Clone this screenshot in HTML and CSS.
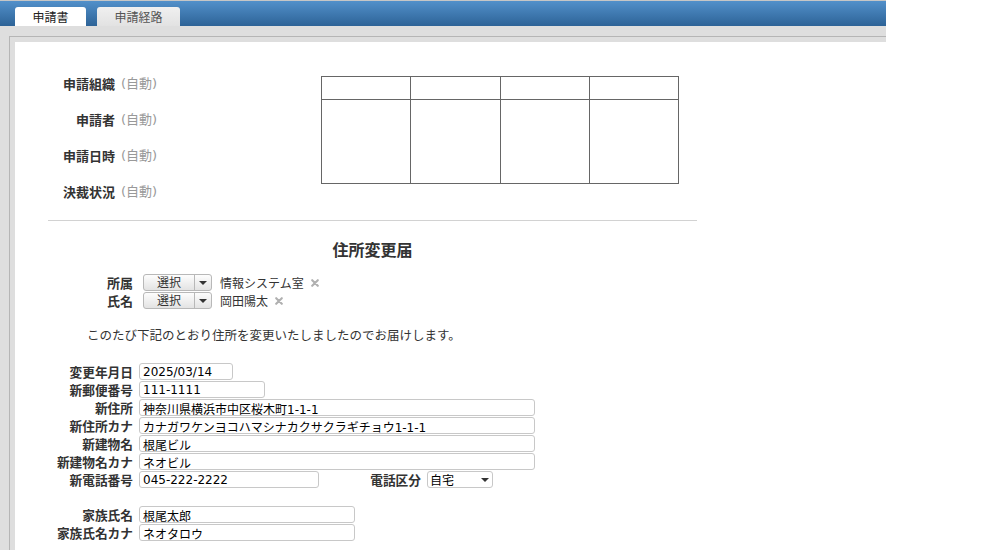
FILE: index.html
```html
<!DOCTYPE html>
<html lang="ja">
<head>
<meta charset="utf-8">
<title>申請書</title>
<link rel="stylesheet" href="styles.css">
</head>
<body>
<div class="app">
  <div class="tabbar">
    <div class="tab tab-active">申請書</div>
    <div class="tab">申請経路</div>
  </div>
  <div class="frame">
    <div class="frame-inner">
      <div class="sheet">
        <div class="content">
          <div class="meta">
            <div class="meta-list">
              <div class="meta-row"><span class="meta-label">申請組織</span><span class="auto">(自動)</span></div>
              <div class="meta-row"><span class="meta-label">申請者</span><span class="auto">(自動)</span></div>
              <div class="meta-row"><span class="meta-label">申請日時</span><span class="auto">(自動)</span></div>
              <div class="meta-row"><span class="meta-label">決裁状況</span><span class="auto">(自動)</span></div>
            </div>
            <div class="stamp">
              <div class="cell"></div><div class="cell"></div><div class="cell"></div><div class="cell"></div>
              <div class="cell"></div><div class="cell"></div><div class="cell"></div><div class="cell"></div>
            </div>
          </div>
          <hr class="divider">
          <h1 class="title">住所変更届</h1>
          <div class="pickers">
            <div class="picker-row">
              <span class="picker-label">所属</span>
              <span class="dd"><span class="dd-main">選択</span><span class="dd-arrow"><span class="tri"></span></span></span>
              <span class="picker-value">情報システム室</span>
              <svg class="remove" viewBox="0 0 10 10" width="8" height="8"><path d="M1.5 1.5 L8.5 8.5 M8.5 1.5 L1.5 8.5" stroke="#b0b0b0" stroke-width="2.6" stroke-linecap="round"/></svg>
            </div>
            <div class="picker-row">
              <span class="picker-label">氏名</span>
              <span class="dd"><span class="dd-main">選択</span><span class="dd-arrow"><span class="tri"></span></span></span>
              <span class="picker-value">岡田陽太</span>
              <svg class="remove" viewBox="0 0 10 10" width="8" height="8"><path d="M1.5 1.5 L8.5 8.5 M8.5 1.5 L1.5 8.5" stroke="#b0b0b0" stroke-width="2.6" stroke-linecap="round"/></svg>
            </div>
          </div>
          <p class="notice">このたび下記のとおり住所を変更いたしましたのでお届けします。</p>
          <div class="form">
            <div class="form-row"><label class="form-label">変更年月日</label><input class="field w-date" type="text" value="2025/03/14"></div>
            <div class="form-row"><label class="form-label">新郵便番号</label><input class="field w-zip" type="text" value="111-1111"></div>
            <div class="form-row"><label class="form-label">新住所</label><input class="field w-long" type="text" value="神奈川県横浜市中区桜木町1-1-1"></div>
            <div class="form-row"><label class="form-label">新住所カナ</label><input class="field w-long" type="text" value="カナガワケンヨコハマシナカクサクラギチョウ1-1-1"></div>
            <div class="form-row"><label class="form-label">新建物名</label><input class="field w-long" type="text" value="根尾ビル"></div>
            <div class="form-row"><label class="form-label">新建物名カナ</label><input class="field w-long" type="text" value="ネオビル"></div>
            <div class="form-row">
              <label class="form-label">新電話番号</label><input class="field w-tel" type="text" value="045-222-2222">
              <label class="form-label label-kind">電話区分</label>
              <span class="select"><span class="select-text">自宅</span><span class="tri"></span></span>
            </div>
            <div class="form-row row-gap"><label class="form-label">家族氏名</label><input class="field w-name" type="text" value="根尾太郎"></div>
            <div class="form-row"><label class="form-label">家族氏名カナ</label><input class="field w-name" type="text" value="ネオタロウ"></div>
          </div>
        </div>
      </div>
    </div>
  </div>
</div>
</body>
</html>
```

FILE: styles.css
```css
* { box-sizing: border-box; }
html, body { margin: 0; padding: 0; background: #fff; }
body {
  font-family: "DejaVu Sans", "Noto Sans CJK JP", sans-serif;
  color: #333;
  overflow: hidden;
}
.app { width: 886px; }

.tabbar {
  height: 26px;
  border-top: 1px solid #c6c6c6;
  background: linear-gradient(#5290ca, #2d6397);
  display: flex;
  align-items: flex-end;
  padding-left: 15px;
  gap: 11px;
}
.tab {
  height: 19px;
  width: 83px;
  border-radius: 3px 3px 0 0;
  background: linear-gradient(#f0f0f0, #e2e2e2);
  color: #555;
  font-family: "Noto Sans CJK JP", sans-serif;
  font-size: 12px;
  line-height: 19px;
  text-align: center;
}
.tab-active {
  width: 71px;
  background: #fff;
  color: #222;
}

.frame {
  background: #dedede;
  padding: 10px 0 0 9px;
}
.frame-inner {
  border-top: 1px solid #b5b5b5;
  border-left: 1px solid #b5b5b5;
  padding: 5px 0 0 5px;
}
.sheet {
  background: #fff;
  min-height: 520px;
}
.content {
  margin-left: 33px;
  width: 649px;
  padding-top: 24px;
}

.meta { display: flex; }
.meta-list { width: 273px; flex: none; }
.meta-row {
  display: flex;
  height: 36px;
  line-height: 36px;
  font-size: 13px;
}
.meta-label {
  width: 67px;
  text-align: right;
  font-weight: bold;
  color: #333;
  font-family: "Noto Sans CJK JP", sans-serif;
}
.auto {
  margin-left: 6px;
  color: #999;
}
.stamp {
  margin-top: 10px;
  display: grid;
  grid-template-columns: 89px 90px 89px 89px;
  grid-template-rows: 23px 84px;
  border-top: 1px solid #666;
  border-left: 1px solid #666;
  align-self: flex-start;
  flex: none;
}
.cell {
  border-right: 1px solid #666;
  border-bottom: 1px solid #666;
}

.divider {
  margin: 10px 0 0;
  border: 0;
  border-top: 1px solid #d2d2d2;
  height: 0;
}
.title {
  margin: 18px 0 0;
  font-size: 16px;
  line-height: 20px;
  font-weight: bold;
  text-align: center;
  color: #333;
  font-family: "Noto Sans CJK JP", sans-serif;
}

.pickers { margin-top: 15px; }
.picker-row {
  display: flex;
  align-items: center;
  height: 17px;
  margin-bottom: 1px;
}
.picker-label {
  width: 85px;
  text-align: right;
  font-size: 13px;
  font-weight: bold;
  font-family: "Noto Sans CJK JP", sans-serif;
  color: #333;
}
.dd {
  margin-left: 10px;
  display: flex;
  width: 69px;
  height: 17px;
  border: 1px solid #b8b8b8;
  border-radius: 3px;
  background: linear-gradient(#fdfdfd, #e3e3e3);
}
.dd-main {
  width: 50px;
  text-align: center;
  font-size: 12px;
  line-height: 16px;
  color: #333;
}
.dd-arrow {
  flex: 1;
  border-left: 1px solid #b8b8b8;
  display: flex;
  align-items: center;
  justify-content: center;
}
.tri {
  width: 0;
  height: 0;
  border-left: 4px solid transparent;
  border-right: 4px solid transparent;
  border-top: 4px solid #333;
}
.picker-value {
  margin-left: 8px;
  font-size: 12px;
  color: #333;
}
.remove { margin-left: 7px; }

.notice {
  margin: 18px 0 18px 39px;
  font-size: 12.5px;
  line-height: 18px;
  color: #333;
}

.form-row {
  display: flex;
  align-items: center;
  height: 17px;
  margin-bottom: 1px;
}
.row-gap { margin-top: 18px; }
.form-label {
  width: 85px;
  flex: none;
  text-align: right;
  font-size: 12.7px;
  font-weight: bold;
  color: #333;
  font-family: "Noto Sans CJK JP", sans-serif;
  margin-right: 6px;
}
.label-kind { width: 102px; }
.field {
  height: 17px;
  border: 1px solid #c8c8c8;
  border-radius: 3px;
  padding: 1px 3px 0;
  margin: 0;
  font-family: "DejaVu Sans", "Noto Sans CJK JP", sans-serif;
  font-size: 12px;
  color: #000;
  background: #fff;
  outline: none;
}
.w-date { width: 94px; }
.w-zip { width: 126px; }
.w-long { width: 396px; }
.w-tel { width: 180px; }
.w-name { width: 216px; }
.select {
  display: flex;
  align-items: center;
  justify-content: space-between;
  width: 66px;
  height: 17px;
  border: 1px solid #c8c8c8;
  border-radius: 3px;
  padding: 0 3px 0 2px;
  font-size: 12px;
  color: #000;
}
```
